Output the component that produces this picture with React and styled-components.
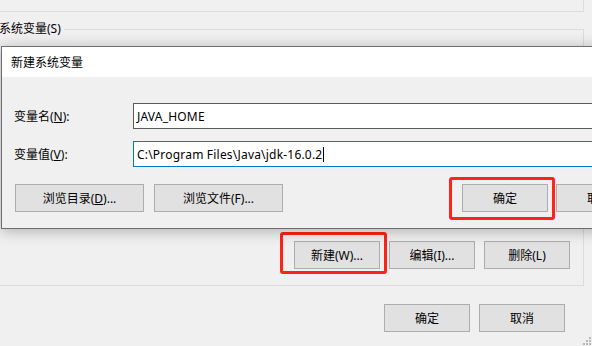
import React from 'react';
import styled, {createGlobalStyle} from 'styled-components';

const GlobalStyle = createGlobalStyle`
  html, body {
    margin: 0;
    padding: 0;
    background: #f0f0f0;
  }
  body {
    font-family: "Segoe UI", "Noto Sans", "Noto Sans CJK SC", sans-serif;
    font-size: 12px;
    color: #000;
  }
`;

const Window = styled.div`
  position: relative;
  width: 592px;
  height: 346px;
  overflow: hidden;
  background: #f0f0f0;
`;

const UserGroupTail = styled.div`
  height: 11px;
  width: 592px;
  margin-left: -9px;
  border-right: 1px solid #dcdcdc;
  border-bottom: 1px solid #dcdcdc;
`;

const Group = styled.fieldset`
  box-sizing: border-box;
  margin: 9px 0 0 0;
  padding: 0 13px 16px 0;
  width: 584px;
  height: 265px;
  border: 1px solid #dcdcdc;
  border-left: 0;
  display: flex;
  flex-direction: column;
  justify-content: flex-end;
`;

const Legend = styled.legend`
  padding: 0 3px 0 0;
  margin-left: -1px;
  line-height: 16px;
`;

const ButtonRow = styled.div`
  display: flex;
  justify-content: flex-end;
  gap: 9px;
`;

const Button = styled.div`
  box-sizing: border-box;
  position: relative;
  width: ${(p) => p.w || 86}px;
  height: 28px;
  display: flex;
  align-items: center;
  justify-content: center;
  background: #e1e1e1;
  border: 1px solid #adadad;
  white-space: nowrap;
  flex-shrink: 0;
`;

const Highlight = styled.div`
  position: relative;
  flex-shrink: 0;
  &::after {
    content: '';
    position: absolute;
    top: ${(p) => p.t}px;
    right: ${(p) => p.r}px;
    bottom: ${(p) => p.b}px;
    left: ${(p) => p.l}px;
    border: 3px solid #ff2318;
    border-radius: 3px;
    pointer-events: none;
  }
`;

const Footer = styled.div`
  display: flex;
  justify-content: flex-end;
  gap: 9px;
  margin-top: 18px;
  padding-right: 27px;
`;

const Grip = styled.svg`
  position: absolute;
  right: 0;
  bottom: 0;
`;

const Dialog = styled.div`
  position: absolute;
  top: 46px;
  left: 1px;
  width: 655px;
  box-sizing: border-box;
  border: 1px solid #6e6e6e;
  background: #f0f0f0;
  box-shadow: 0 2px 14px rgba(0, 0, 0, 0.28);
`;

const TitleBar = styled.div`
  height: 30px;
  background: #fff;
  display: flex;
  align-items: center;
  padding-left: 9px;
`;

const Body = styled.div`
  padding: 26px 13px 16px 12px;
`;

const Form = styled.div`
  display: grid;
  grid-template-columns: 119px 1fr;
  row-gap: 12px;
  align-items: center;
`;

const Input = styled.div`
  box-sizing: border-box;
  height: 26px;
  display: flex;
  align-items: center;
  padding-left: 3px;
  background: #fff;
  border: 1px solid ${(p) => (p.focused ? '#0078d7' : '#5a5a5a')};
  letter-spacing: 0.2px;
  white-space: nowrap;
`;

const Caret = styled.span`
  display: inline-block;
  width: 1px;
  height: 15px;
  background: #000;
  margin-left: 1px;
`;

const DialogButtons = styled.div`
  display: flex;
  align-items: center;
  gap: 10px;
  margin-top: 17px;
  padding-left: 1px;
`;

const OkGroup = styled.div`
  display: flex;
  gap: 8px;
  margin-left: auto;
`;

export default function App() {
  return (
    <>
      <GlobalStyle />
      <Window>
        <UserGroupTail />
        <Group>
          <Legend>系统变量(S)</Legend>
          <ButtonRow>
            <Highlight t={-9} r={-7} b={-5} l={-14}>
              <Button>新建(W)...</Button>
            </Highlight>
            <Button>编辑(I)...</Button>
            <Button>删除(L)</Button>
          </ButtonRow>
        </Group>
        <Footer>
          <Button>确定</Button>
          <Button>取消</Button>
        </Footer>
        <Grip width="10" height="10" viewBox="0 0 10 10">
          <g fill="#b8b8b8">
            <rect x="7" y="1" width="2" height="2" />
            <rect x="4" y="4" width="2" height="2" />
            <rect x="7" y="4" width="2" height="2" />
            <rect x="1" y="7" width="2" height="2" />
            <rect x="4" y="7" width="2" height="2" />
            <rect x="7" y="7" width="2" height="2" />
          </g>
        </Grip>

        <Dialog>
          <TitleBar>新建系统变量</TitleBar>
          <Body>
            <Form>
              <span>
                变量名(<u>N</u>):
              </span>
              <Input>JAVA_HOME</Input>
              <span>
                变量值(<u>V</u>):
              </span>
              <Input focused>
                C:\Program Files\Java\jdk-16.0.2
                <Caret />
              </Input>
            </Form>
            <DialogButtons>
              <Button w={129}>
                浏览目录(<u>D</u>)...
              </Button>
              <Button w={129}>浏览文件(F)...</Button>
              <OkGroup>
                <Highlight t={-7} r={-7} b={-8} l={-13}>
                  <Button>确定</Button>
                </Highlight>
                <Button>取消</Button>
              </OkGroup>
            </DialogButtons>
          </Body>
        </Dialog>
      </Window>
    </>
  );
}
